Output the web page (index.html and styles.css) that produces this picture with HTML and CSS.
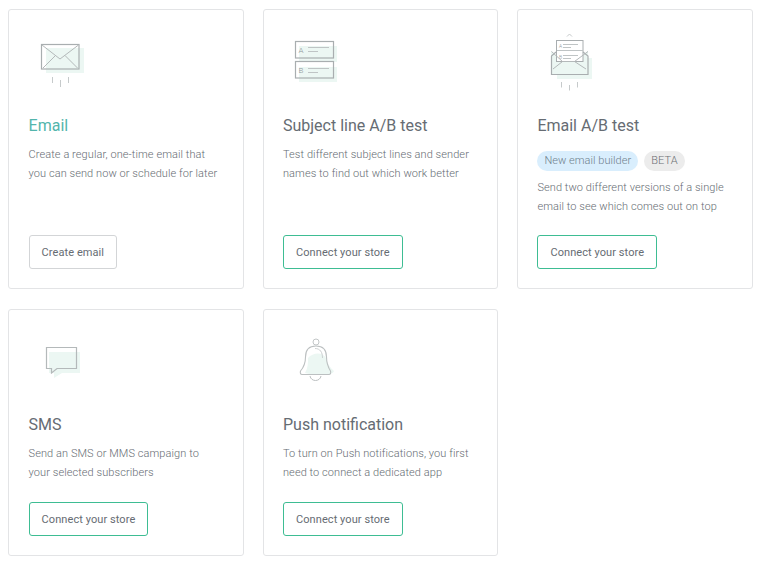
FILE: index.html
```html
<!DOCTYPE html>
<html lang="en">
<head>
<meta charset="utf-8">
<title>Create campaign</title>
<link rel="stylesheet" href="styles.css">
</head>
<body>
<main class="grid">
  <section class="card card-tall">
    <svg class="icon" width="70" height="70" viewBox="0 0 70 70" fill="none">
      <rect x="17" y="16" width="38" height="25" fill="#ecf7f3"/>
      <rect x="12.500" y="12.500" width="37.500" height="24.500" stroke="#a9aeb0" stroke-width="1.200"/>
      <path d="M13 13 L31 27 L49.500 13 M14 36 L26.500 23.500 M48.500 36 L36 23.500" stroke="#b4b9ba"/>
      <path d="M23.500 45v6M31.500 48v7M39.500 45v6" stroke="#c6cacb"/>
    </svg>
    <h2 class="title title-active">Email</h2>
    <p class="desc">Create a regular, one-time email that<br>you can send now or schedule for later</p>
    <a class="btn btn-plain">Create email</a>
  </section>

  <section class="card card-tall">
    <svg class="icon" width="70" height="70" viewBox="0 0 70 70" fill="none">
      <rect x="16" y="14" width="38" height="16" fill="#ecf7f3"/>
      <rect x="16" y="35" width="38" height="15" fill="#ecf7f3"/>
      <rect x="12.500" y="9.500" width="38" height="16.500" stroke="#a9aeb0" stroke-width="1.200"/>
      <rect x="12.500" y="29.500" width="38" height="16.500" stroke="#a9aeb0" stroke-width="1.200"/>
      <path d="M25 15.500h21M25 19.500h10M25 36.500h21M25 40.500h10" stroke="#bfc4c5"/>
      <text class="icon-letter" x="15.500" y="21">A</text>
      <text class="icon-letter" x="15.500" y="41">B</text>
    </svg>
    <h2 class="title">Subject line A/B test</h2>
    <p class="desc">Test different subject lines and sender<br>names to find out which work better</p>
    <a class="btn btn-green">Connect your store</a>
  </section>

  <section class="card card-tall">
    <svg class="icon" width="70" height="70" viewBox="0 0 70 70" fill="none">
      <rect x="20" y="26" width="35" height="21" fill="#ecf7f3"/>
      <path d="M14 19 L25.500 29H37.500L51 19V42H14Z" fill="#ecf7f3"/>
      <path d="M30 4.500 L32.500 2 L35 4.500" stroke="#c6cacb"/>
      <rect x="19.500" y="8.500" width="26.500" height="21" fill="#fff" stroke="#a9aeb0"/>
      <path d="M26 12.500h15M26 15.500h8M26 23.500h15M26 26.500h8M20 18.500h26" stroke="#bfc4c5"/>
      <text class="icon-letter-sm" x="22" y="16">A</text>
      <text class="icon-letter-sm" x="22" y="26.500">B</text>
      <path d="M19 20 L14.500 24V42.500H51V24L46 20" stroke="#a9aeb0" stroke-width="1.200"/>
      <path d="M14.500 19.500 L25.500 29.500H37.500L51 19.500M16 37 L25.500 29.500M49 37 L37.500 29.500" stroke="#b4b9ba"/>
      <path d="M24.500 50v5.500M32.500 53v5.500M40.500 50v5.500" stroke="#c6cacb"/>
    </svg>
    <h2 class="title">Email A/B test</h2>
    <div class="tags"><span class="tag tag-blue">New email builder</span><span class="tag tag-grey">BETA</span></div>
    <p class="desc">Send two different versions of a single<br>email to see which comes out on top</p>
    <a class="btn btn-green">Connect your store</a>
  </section>

  <section class="card card-short">
    <svg class="icon" width="70" height="70" viewBox="0 0 70 70" fill="none">
      <path d="M20 21H51V42H33L25 47V42H20Z" fill="#ecf7f3"/>
      <path d="M17.500 16.500H47.500V37.500H28L22.500 42V37.500H17.500Z" stroke="#b4b9ba" stroke-width="1.200"/>
    </svg>
    <h2 class="title">SMS</h2>
    <p class="desc">Send an SMS or MMS campaign to<br>your selected subscribers</p>
    <a class="btn btn-green">Connect your store</a>
  </section>

  <section class="card card-short">
    <svg class="icon" width="70" height="70" viewBox="0 0 70 70" fill="none">
      <path d="M25 27C30 21 40 21 43 27C45 33 47 37 51 40C50 43 45 44 38 44C32 44 26 43 22 42C25 37 25 32 25 27Z" fill="#ecf7f3"/>
      <circle cx="33" cy="11" r="3" stroke="#c2c6c7"/>
      <path d="M17.500 40C21 36 22.500 32 22.500 26C22.500 18 27 15 33 15C39 15 43.500 18 43.500 26C43.500 32 45 36 47.500 40C48 42 47.500 43.500 46 43.500H19C17.500 43.500 17 42 17.500 40Z" stroke="#bcc0c1" stroke-width="1.100"/>
      <path d="M32 17.500C37 17.500 39.500 21 39.500 27" stroke="#cdd1d2"/>
      <path d="M27 45C28 51 37 51 38 45" stroke="#bcc0c1"/>
    </svg>
    <h2 class="title">Push notification</h2>
    <p class="desc">To turn on Push notifications, you first<br>need to connect a dedicated app</p>
    <a class="btn btn-green">Connect your store</a>
  </section>
</main>
</body>
</html>
```
FILE: styles.css
```css
* { box-sizing: border-box; }
html, body { margin: 0; background: #fff; }
body {
  padding: 9px 10.400px 0 8.400px;
  font-family: Roboto, "Liberation Sans", sans-serif;
  color: #666c73;
}
.grid {
  display: grid;
  grid-template-columns: repeat(3, 1fr);
  column-gap: 19px;
  row-gap: 20px;
}
.card {
  display: flex;
  flex-direction: column;
  align-items: flex-start;
  padding: 20px 20px 19px 19.200px;
  border: 1px solid #e3e4e6;
  border-radius: 3px;
}
.card-tall { height: 280px; }
.card-short { height: 247px; }
.icon { display: block; flex: none; width: 70px; height: 70px; }
.card-tall .icon { margin-top: 2px; }
.card-short .icon { margin-top: 1px; }
.title {
  margin: 12px 0 0;
  font-size: 16px;
  line-height: 24px;
  font-weight: 400;
  color: #666c73;
}
.title-active { color: #52b5ac; }
.desc {
  margin: 7px 0 0;
  font-size: 11px;
  line-height: 19px;
  font-weight: 300;
  letter-spacing: .08px;
  color: #666c73;
}
.tags { display: flex; gap: 6px; margin-top: 13px; }
.tag {
  height: 20px;
  padding: 0 7px;
  border-radius: 10px;
  font-size: 11px;
  line-height: 20px;
  font-weight: 300;
  letter-spacing: .05px;
}
.tag-blue { background: #d9eefd; color: #6f7f8c; }
.tag-grey { background: #ececec; color: #6c7175; }
.btn {
  display: block;
  margin-top: auto;
  height: 34px;
  padding: 0 12px;
  border-radius: 3px;
  font-size: 11px;
  line-height: 33px;
  letter-spacing: .08px;
  color: #666c73;
  background: #fff;
}
.btn-plain { border: 1px solid #d3d5d7; }
.btn-green { border: 1px solid #3ebd93; }
.icon-letter { font: 300 8px Roboto, sans-serif; fill: #8f9598; }
.icon-letter-sm { font: 300 5px Roboto, sans-serif; fill: #8f9598; }
```
